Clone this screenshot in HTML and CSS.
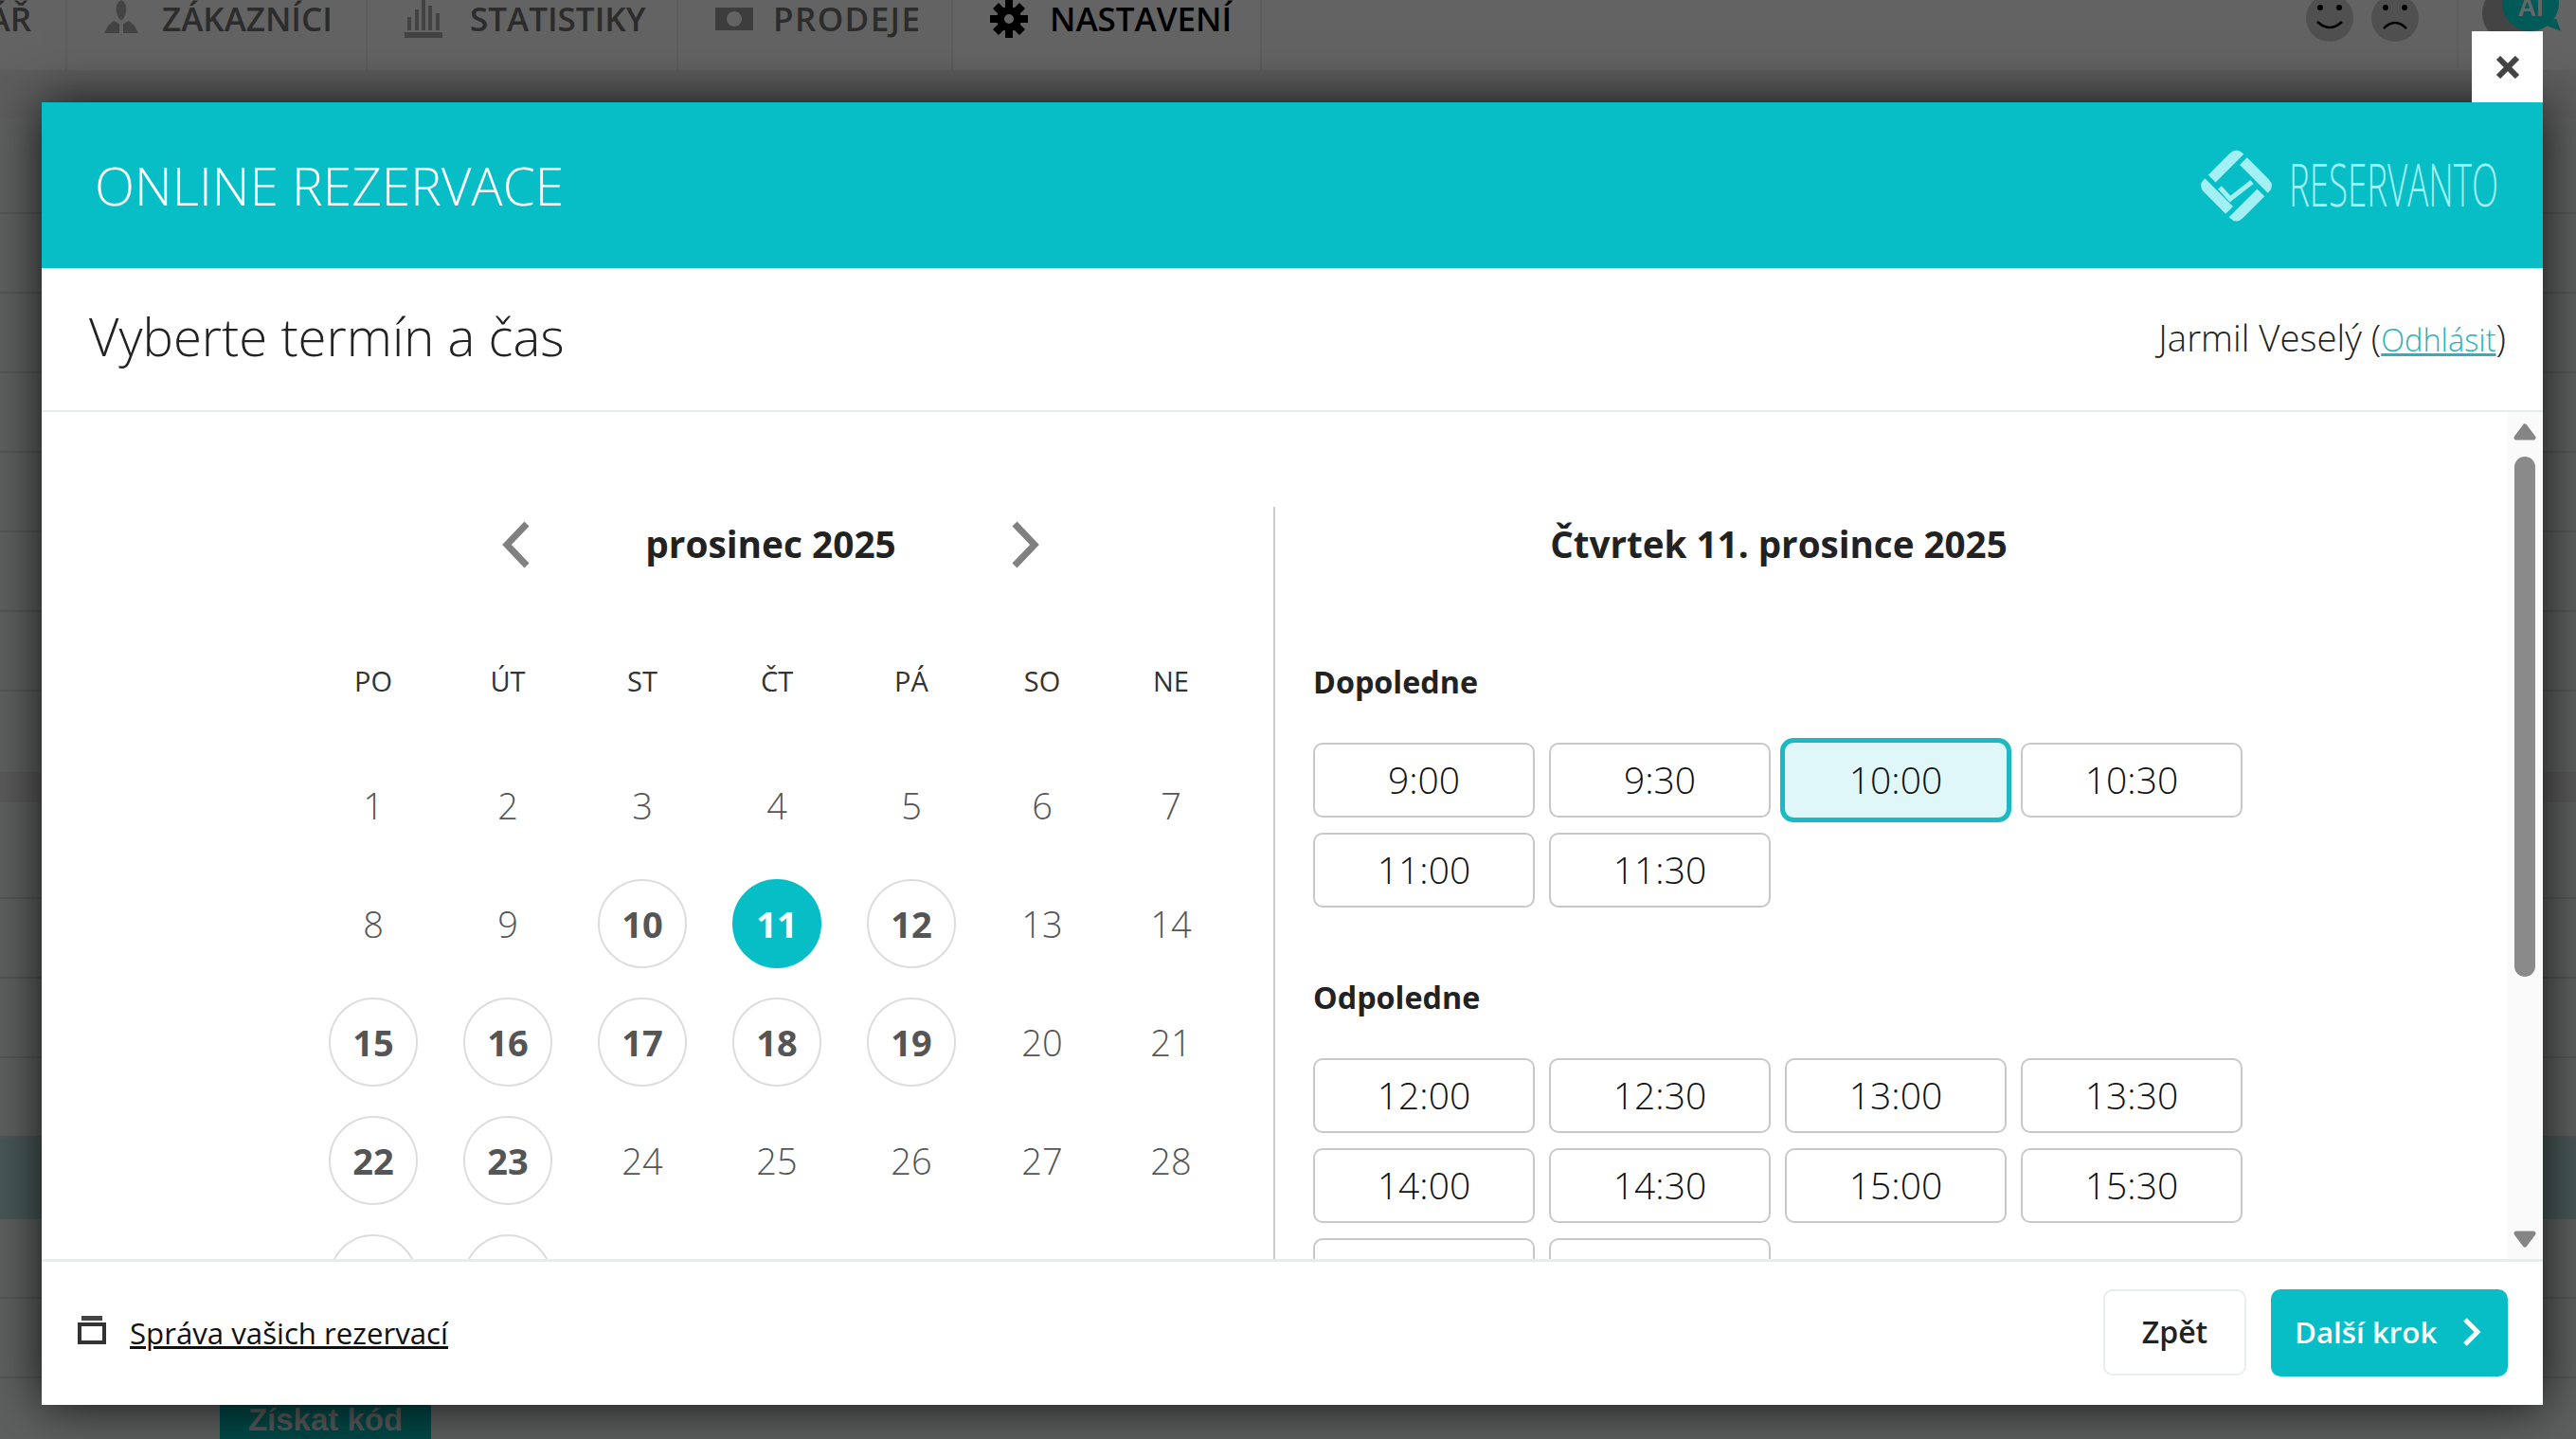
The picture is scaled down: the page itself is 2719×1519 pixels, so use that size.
FILE: index.html
```html
<!DOCTYPE html>
<html lang="cs">
<head>
<meta charset="utf-8">
<title>Online rezervace</title>
<link rel="stylesheet" href="styles.css">
</head>
<body>
<div class="app">
  <nav class="topnav">
    <div class="tab tab-first"><span class="tab-label">ÁŘ</span></div>
    <div class="tab tab-z">
      <svg class="tab-icon" viewBox="0 0 36 36"><path d="M18 0c5 2 6 8 5 13-1 4-3 7-4 8h-2c-1-1-3-4-4-8-1-5 0-11 5-13zM10 22l6 3v10H0l4-8zM26 22l-6 3v10h16l-4-8z"/></svg>
      <span class="tab-label">ZÁKAZNÍCI</span>
    </div>
    <div class="tab tab-s">
      <svg class="tab-icon" viewBox="0 0 40 40"><path d="M0 34h40v6H0zM3 18h4v14H3zM11 10h4v22h-4zM18 0h4v32h-4zM25 6h4v26h-4zM33 14h4v18h-4z"/></svg>
      <span class="tab-label">STATISTIKY</span>
    </div>
    <div class="tab tab-p">
      <svg class="tab-icon tab-icon-card" viewBox="0 0 40 24"><path fill-rule="evenodd" d="M0 0h40v24H0zM20 4a8 8 0 1 0 0 16 8 8 0 0 0 0-16z"/></svg>
      <span class="tab-label">PRODEJE</span>
    </div>
    <div class="tab tab-n tab-active">
      <svg class="tab-icon tab-icon-gear" viewBox="0 0 40 40"><g fill="#000"><path fill-rule="evenodd" d="M20 7a13 13 0 1 0 0 26 13 13 0 0 0 0-26zm0 8a5 5 0 1 1 0 10 5 5 0 0 1 0-10z"/><path d="M16 0h8v8h-8zM16 32h8v8h-8zM0 16h8v8H0zM32 16h8v8h-8zM3 9l6-6 6 6-6 6zM25 9l6-6 6 6-6 6zM3 31l6-6 6 6-6 6zM25 31l6-6 6 6-6 6z"/></g></svg>
      <span class="tab-label">NASTAVENÍ</span>
    </div>
    <div class="nav-right">
      <svg class="face" viewBox="0 0 50 50"><circle cx="25" cy="25" r="25" fill="#c8c8c8"/><circle cx="15" cy="14" r="3"/><circle cx="35" cy="14" r="3"/><path d="M12 29q13 12 26 0" fill="none" stroke="#000" stroke-width="2.5"/></svg>
      <svg class="face" viewBox="0 0 50 50"><circle cx="25" cy="25" r="25" fill="#c8c8c8"/><circle cx="15" cy="14" r="3"/><circle cx="35" cy="14" r="3"/><path d="M13 36q12-12 24 0" fill="none" stroke="#000" stroke-width="2.5"/></svg>
      <div class="nav-sep"></div>
      <div class="avatar"></div>
      <div class="ai-bubble">AI</div>
    </div>
  </nav>
  <div class="subbar"></div>
  <div class="row row-first"></div>
  <div class="row"></div>
  <div class="row"></div>
  <div class="row"></div>
  <div class="row"></div>
  <div class="row"></div>
  <div class="row"></div>
  <div class="row row-last-a"></div>
  <div class="band"></div>
  <div class="row row-first-b"></div>
  <div class="row"></div>
  <div class="row"></div>
  <div class="row"></div>
  <div class="row row-teal"></div>
  <div class="row"></div>
  <div class="row"></div>
  <div class="row row-code"><span class="code-btn">Získat kód</span></div>
</div>

<div class="overlay"></div>

<div class="modal">
  <button class="close" type="button" aria-label="Zavřít">
    <svg viewBox="0 0 26 24" class="close-icon"><path d="M3 2l20 20M23 2L3 22"/></svg>
  </button>
  <header class="modal-head">
    <h1 class="modal-title">ONLINE REZERVACE</h1>
    <svg class="logo" viewBox="0 0 316 76" role="img" aria-label="Reservanto">
      <g transform="translate(38.5 38) rotate(45)" fill="#a3f0f4">
        <path d="M-13-29H19Q29-29 29-19V-18H-13Z"/>
        <path d="M-13-29H19Q29-29 29-19V-18H-13Z" transform="rotate(90)"/>
        <path d="M-13-29H19Q29-29 29-19V-18H-13Z" transform="rotate(180)"/>
        <path d="M-13-29H19Q29-29 29-19V-18H-13Z" transform="rotate(270)"/>
      </g>
      <path d="M21 40l11 12 23-18" fill="none" stroke="#a3f0f4" stroke-width="5"/>
      <text x="94" y="60" class="logo-text" textLength="221" lengthAdjust="spacingAndGlyphs">RESERVANTO</text>
    </svg>
  </header>
  <div class="title-row">
    <h2 class="step-title">Vyberte termín a čas</h2>
    <div class="user">Jarmil Veselý (<a href="#" class="user-link">Odhlásit</a>)</div>
  </div>
  <main class="content">
    <section class="cal-pane">
      <div class="month-nav">
        <svg class="chev" viewBox="0 0 30 50"><path d="M26 3L5 25l21 22"/></svg>
        <div class="month-name">prosinec 2025</div>
        <svg class="chev" viewBox="0 0 30 50"><path d="M4 3l21 22L4 47"/></svg>
      </div>
      <div class="cal-grid">
        <div class="dow">PO</div><div class="dow">ÚT</div><div class="dow">ST</div><div class="dow">ČT</div><div class="dow">PÁ</div><div class="dow">SO</div><div class="dow">NE</div>
        <div class="day">1</div><div class="day">2</div><div class="day">3</div><div class="day">4</div><div class="day">5</div><div class="day">6</div><div class="day">7</div>
        <div class="day">8</div><div class="day">9</div><div class="day"><span class="pick">10</span></div><div class="day"><span class="pick pick-on">11</span></div><div class="day"><span class="pick">12</span></div><div class="day">13</div><div class="day">14</div>
        <div class="day"><span class="pick">15</span></div><div class="day"><span class="pick">16</span></div><div class="day"><span class="pick">17</span></div><div class="day"><span class="pick">18</span></div><div class="day"><span class="pick">19</span></div><div class="day">20</div><div class="day">21</div>
        <div class="day"><span class="pick">22</span></div><div class="day"><span class="pick">23</span></div><div class="day">24</div><div class="day">25</div><div class="day">26</div><div class="day">27</div><div class="day">28</div>
        <div class="day"><span class="pick">29</span></div><div class="day"><span class="pick">30</span></div><div class="day">31</div>
      </div>
    </section>
    <section class="time-pane">
      <div class="date-title">Čtvrtek 11. prosince 2025</div>
      <div class="part">Dopoledne</div>
      <div class="slots">
        <button class="slot" type="button">9:00</button>
        <button class="slot" type="button">9:30</button>
        <button class="slot slot-on" type="button">10:00</button>
        <button class="slot" type="button">10:30</button>
        <button class="slot" type="button">11:00</button>
        <button class="slot" type="button">11:30</button>
      </div>
      <div class="part part-next">Odpoledne</div>
      <div class="slots">
        <button class="slot" type="button">12:00</button>
        <button class="slot" type="button">12:30</button>
        <button class="slot" type="button">13:00</button>
        <button class="slot" type="button">13:30</button>
        <button class="slot" type="button">14:00</button>
        <button class="slot" type="button">14:30</button>
        <button class="slot" type="button">15:00</button>
        <button class="slot" type="button">15:30</button>
        <button class="slot" type="button">16:00</button>
        <button class="slot" type="button">16:30</button>
      </div>
    </section>
    <div class="scrollbar">
      <svg class="sb-arrow" viewBox="0 0 24 18"><path d="M12 3l9 12H3z"/></svg>
      <div class="sb-thumb"></div>
      <svg class="sb-arrow sb-arrow-down" viewBox="0 0 24 18"><path d="M12 15l9-12H3z"/></svg>
    </div>
  </main>
  <footer class="modal-foot">
    <a href="#" class="manage">
      <svg class="manage-icon" viewBox="0 0 30 30"><path d="M4 0h22v5H4z" fill="#444"/><path d="M2 9h26v19H2z" fill="none" stroke="#333" stroke-width="4"/></svg>
      <span class="manage-text">Správa vašich rezervací</span>
    </a>
    <div class="foot-actions">
      <button class="btn btn-back" type="button">Zpět</button>
      <button class="btn btn-next" type="button">Další krok
        <svg class="btn-chev" viewBox="0 0 20 32"><path d="M3 3l13 13L3 29"/></svg>
      </button>
    </div>
  </footer>
</div>
</body>
</html>
```

FILE: styles.css
```css
* { box-sizing: border-box; }
html, body { margin: 0; height: 100%; }
body {
  position: relative;
  height: 1519px;
  overflow: hidden;
  background: #e6f0ee;
  font-family: "Open Sans", "Noto Sans", sans-serif;
  color: #222;
}
h1, h2 { margin: 0; font-weight: 300; }
a { color: inherit; }
button { font-family: inherit; cursor: pointer; }

/* page behind the dialog */
.app { height: 1519px; overflow: hidden; }
.topnav {
  height: 75px;
  display: flex;
  position: relative;
  background: #f7f7f7;
  border-bottom: 1px solid #e8e8e8;
}
.tab {
  display: flex;
  align-items: flex-start;
  gap: 25px;
  border-right: 2px solid #e8e8e8;
  color: #6f6f6f;
  font-size: 35px;
  font-weight: 600;
  padding-left: 39px;
  line-height: 40px;
}
.tab-label { display: block; white-space: nowrap; }
.tab-first { width: 71px; padding-left: 0; justify-content: flex-end; padding-right: 36px; }
.tab-z { width: 317px; }
.tab-s { width: 328px; gap: 29px; }
.tab-p { width: 290px; gap: 21px; letter-spacing: 1.4px; }
.tab-n { width: 326px; gap: 23px; }
.tab-active { background: #fbfbfb; color: #000; }
.tab-icon { width: 36px; height: 36px; flex: none; fill: #a8a8a8; }
.tab-s .tab-icon { width: 40px; height: 40px; }
.tab-icon-card { width: 40px; height: 24px; margin-top: 8px; fill: #9a9a9a; }
.tab-icon-gear { width: 40px; height: 40px; }
.nav-right {
  flex: 1;
  display: flex;
  justify-content: flex-end;
  align-items: flex-start;
  position: relative;
}
.face { width: 50px; height: 50px; margin-top: -6px; margin-right: 19px; }
.face + .face { margin-right: 40px; }
.nav-sep { width: 2px; height: 72px; background: #e8e8e8; margin-right: 25px; }
.avatar { width: 60px; height: 60px; border-radius: 50%; background: #aaa; margin-top: -16px; margin-right: 39px; }
.ai-bubble {
  position: absolute;
  right: 18px;
  top: -27px;
  width: 60px;
  height: 60px;
  border-radius: 50%;
  background: #00e0da;
  color: #fff;
  font-family: "Liberation Sans", sans-serif;
  font-weight: 700;
  font-size: 27px;
  line-height: 70px;
  text-align: center;
}
.ai-bubble::after {
  content: "";
  position: absolute;
  right: 0;
  bottom: -3px;
  border-style: solid;
  border-width: 14px 0 0 16px;
  border-color: #00e0da transparent transparent transparent;
  transform: rotate(-20deg);
}
.subbar { height: 50px; background: #e8e8e8; }
.row { height: 84px; border-bottom: 2px solid #cfd8d6; background: #e9f0ee; }
.row-first { height: 101px; }
.row-last-a { height: 85px; border-bottom: 0; }
.band { height: 32px; background: #e4e2e2; }
.row-first-b { height: 102px; }
.row-teal { height: 86px; background: #b4dcd8; border-bottom: 0; }
.row-code { padding: 14px 0 0 232px; height: 120px; }
.code-btn {
  display: block;
  width: 223px;
  height: 70px;
  background: #00b3b0;
  color: #dcdcdc;
  font-family: "Liberation Sans", sans-serif;
  font-weight: 700;
  font-size: 33px;
  line-height: 60px;
  text-align: center;
}
.overlay { position: absolute; inset: 0; background: rgba(0, 0, 0, .6); }

/* dialog */
.modal {
  position: absolute;
  left: 44px;
  top: 108px;
  width: 2640px;
  height: 1375px;
  background: #fff;
  display: flex;
  flex-direction: column;
  box-shadow: 0 0 50px rgba(0, 0, 0, .8);
}
.close {
  position: absolute;
  right: 0;
  top: -75px;
  width: 75px;
  height: 75px;
  border: 0;
  padding: 0;
  background: #fff;
  display: flex;
  align-items: center;
  justify-content: center;
}
.close-icon { width: 26px; height: 24px; fill: none; stroke: #444; stroke-width: 6; }
.modal-head {
  height: 175px;
  flex: none;
  background: #07bec6;
  display: flex;
  align-items: center;
  justify-content: space-between;
  padding: 0 46px 0 56px;
}
.modal-title { color: #fff; font-size: 55px; line-height: 1; }
.logo { width: 316px; height: 76px; }
.logo-text { font-family: "Open Sans", sans-serif; font-weight: 300; font-size: 62px; fill: #a3f0f4; }
.title-row {
  height: 152px;
  flex: none;
  border-bottom: 2px solid #e6eded;
  display: flex;
  align-items: center;
  justify-content: space-between;
  padding: 0 39px 6px 50px;
}
.step-title { font-size: 54.500px; line-height: 1; color: #222; }
.user { font-size: 38.400px; font-weight: 300; color: #222; margin-top: 2px; }
.user-link { color: #2ab0c0; font-size: 32.500px; }

.content {
  height: 894px;
  flex: none;
  position: relative;
  overflow: hidden;
  display: flex;
  padding-top: 100px;
}
.cal-pane {
  width: 1302px;
  flex: none;
  border-right: 2px solid #ccc;
  padding-left: 279px;
}
.month-nav {
  width: 982px;
  height: 78px;
  display: flex;
  align-items: center;
  padding-left: 207px;
}
.chev { width: 30px; height: 50px; fill: none; stroke: #808080; stroke-width: 7; flex: none; margin-top: 1px; }
.month-name { width: 507px; text-align: center; font-size: 38.800px; font-weight: 700; color: #222; }
.cal-grid {
  display: grid;
  grid-template-columns: repeat(5, 142px) 134px 138px;
  grid-auto-rows: 125px;
  grid-template-rows: 60px;
  margin-top: 75px;
}
.dow {
  display: flex;
  align-items: center;
  justify-content: center;
  font-size: 29px;
  color: #333;
  margin-bottom: 0;
}
.day {
  display: flex;
  align-items: center;
  justify-content: center;
  font-size: 38px;
  font-weight: 300;
  color: #555;
}
.dow:nth-child(7) ~ .day { position: relative; top: 39px; }
.pick {
  width: 94px;
  height: 94px;
  border-radius: 50%;
  border: 2px solid #ddd;
  display: flex;
  align-items: center;
  justify-content: center;
  font-weight: 700;
  color: #555;
}
.pick-on { background: #07bec6; border-color: #07bec6; color: #fff; }

.time-pane { width: 1060px; flex: none; padding: 0 37px 0 40px; }
.date-title {
  height: 78px;
  display: flex;
  align-items: center;
  justify-content: center;
  font-size: 38.600px;
  font-weight: 700;
  color: #222;
}
.part {
  height: 60px;
  margin: 77px 0 34px;
  padding-bottom: 2px;
  display: flex;
  align-items: center;
  font-size: 32.300px;
  font-weight: 700;
  color: #222;
}
.part-next { margin-top: 65px; }
.slots {
  display: grid;
  grid-template-columns: repeat(4, 234px);
  grid-auto-rows: 79px;
  gap: 16px 15px;
}
.slot {
  border: 2px solid #c8c8c8;
  border-radius: 10px;
  background: #fff;
  font-size: 39px;
  font-weight: 300;
  color: #111;
  padding: 0 0 3px;
}
.slot-on {
  margin: -5px;
  border: 5px solid #1cb9c5;
  border-radius: 14px;
  background: #dff7f8;
}

.scrollbar {
  position: absolute;
  right: 0;
  top: 0;
  bottom: 0;
  width: 38px;
  background: #fafafa;
  display: flex;
  flex-direction: column;
  align-items: center;
  padding: 12px 0;
}
.sb-arrow { width: 24px; height: 18px; fill: #858585; stroke: #858585; stroke-width: 5; stroke-linejoin: round; flex: none; }
.sb-thumb { width: 22px; height: 549px; border-radius: 11px; background: #8a8a8a; margin-top: 17px; }
.sb-arrow-down { margin-top: auto; }

.modal-foot {
  flex: 1;
  border-top: 3px solid #e6eded;
  display: flex;
  align-items: center;
  justify-content: space-between;
  padding: 0 37px 2px 38px;
}
.manage { display: flex; align-items: center; gap: 25px; color: #111; font-size: 31.200px; }
.manage-icon { width: 30px; height: 30px; flex: none; margin-top: -6px; }
.manage-text { text-decoration: underline; }
.foot-actions { display: flex; gap: 26px; align-items: center; }
.btn { height: 91px; border-radius: 10px; font-size: 32px; font-weight: 600; padding-bottom: 3px; }
.btn-back { width: 151px; background: #fff; border: 2px solid #e8eeee; color: #222; }
.btn-next {
  width: 250px;
  height: 92px;
  background: #07bec6;
  border: 0;
  color: #fff;
  display: flex;
  align-items: center;
  gap: 27px;
  padding-left: 25px;
  font-size: 31.300px;
}
.btn-chev { width: 20px; height: 32px; fill: none; stroke: #fff; stroke-width: 5; flex: none; }
```
